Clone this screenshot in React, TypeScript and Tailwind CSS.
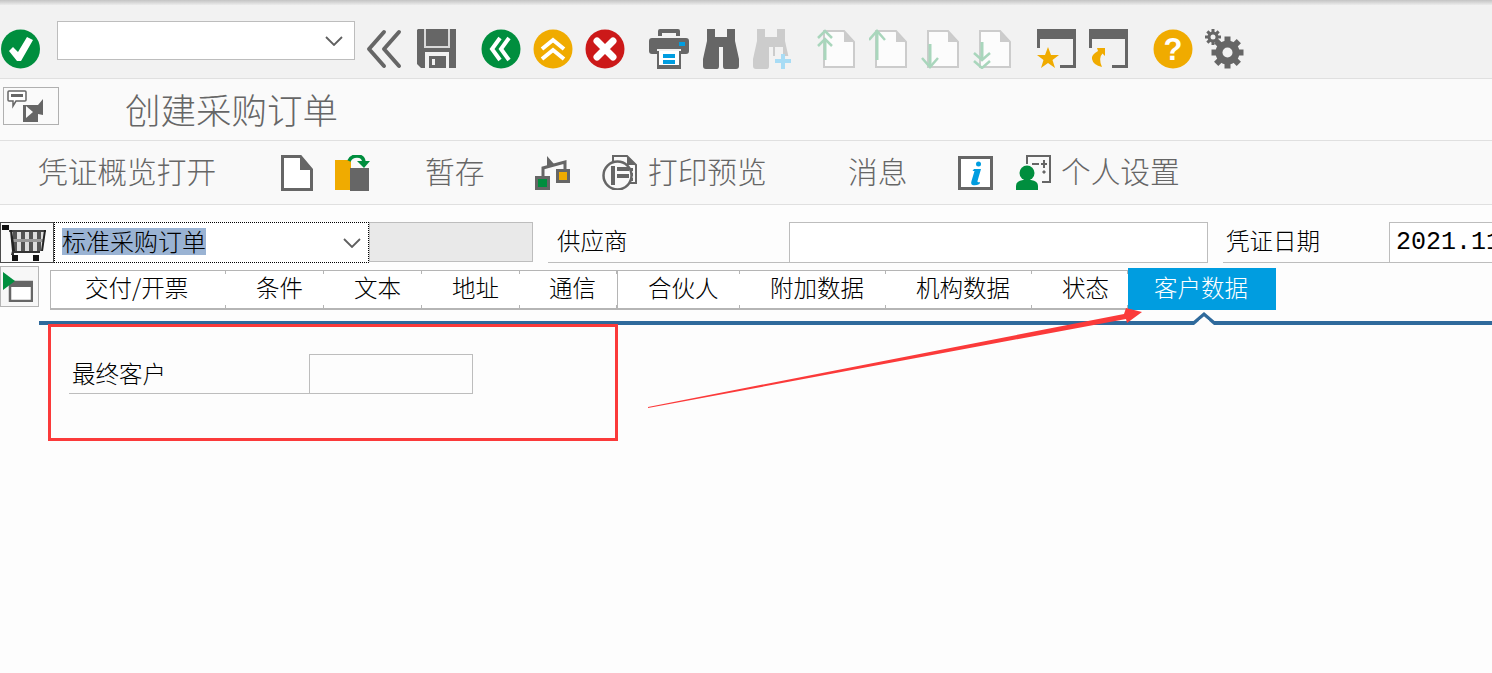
import React from 'react';

const GRAY = '#666666';
const GREEN = '#008e3e';
const AMBER = '#f0ab00';
const BLUE = '#009de0';
const PALE_GREEN = '#a9d6bc';
const PALE_GRAY = '#cccccc';

const Icon: React.FC<{ children: React.ReactNode; className?: string; size?: number; h?: number }> = ({ children, className, size = 40, h = 40 }) => (
  <svg width={size} height={h} viewBox={`0 0 ${size} ${h}`} className={`shrink-0 block ${className ?? ''}`}>
    {children}
  </svg>
);

const CheckIcon = () => (
  <Icon>
    <circle cx="19.500" cy="20" r="19.500" fill={GREEN} />
    <path d="M8 22l4-4 5 5 9-15 6 3-12 21h-4z" fill="white" />
  </Icon>
);

const BackIcon = () => (
  <Icon size={36}>
    <path d="M18 3L3 20l15 17M33 3L18 20l15 17" fill="none" stroke={GRAY} strokeWidth="4" strokeLinecap="round" strokeLinejoin="round" />
  </Icon>
);

const SaveIcon = () => (
  <Icon>
    <path d="M1 0h38v39H4l-4-4V1z" fill={GRAY} />
    <path d="M7 0h26v19H7z" fill="#d9d9d9" />
    <path d="M9 0h22v17H9z" fill={GRAY} />
    <path d="M8 23h24v16H8z" fill="#f2f2f2" />
    <path d="M12 27h17v12H12z" fill={GRAY} />
    <path d="M15 30h3v6h-3z" fill="#f2f2f2" />
  </Icon>
);

const GreenBackIcon = () => (
  <Icon>
    <circle cx="20" cy="20" r="19.500" fill={GREEN} />
    <path d="M19 9l-8 11 8 11M28 9l-8 11 8 11" fill="none" stroke="white" strokeWidth="4" />
  </Icon>
);

const AmberUpIcon = () => (
  <Icon>
    <circle cx="20" cy="20" r="19.500" fill={AMBER} />
    <path d="M9 20l11-9 11 9M9 30l11-9 11 9" fill="none" stroke="white" strokeWidth="4" />
  </Icon>
);

const RedCloseIcon = () => (
  <Icon>
    <circle cx="20" cy="20" r="19.500" fill="#cc1919" />
    <path d="M12 12l16 16M28 12L12 28" stroke="white" strokeWidth="7" strokeLinecap="round" />
  </Icon>
);

const PrinterIcon = () => (
  <Icon>
    <path d="M9 7V2q0-2 2-2h18q2 0 2 2v5h-4V4H13v3z" fill={GRAY} />
    <path d="M3 9h34q3 0 3 3v10q0 3-3 3h-5v-5H8v5H3q-3 0-3-3V12q0-3 3-3z" fill={GRAY} />
    <path d="M30 13h6v4h-6z" fill={BLUE} />
    <path d="M8 22h24v18H8z" fill={GRAY} />
    <path d="M10 22h20v14H10z" fill="white" />
    <path d="M14 25h12v4H14zM14 31h12v4H14z" fill={BLUE} />
  </Icon>
);

const binoPath = 'M4 0h8v8h12V0h8v12l4 18v7q0 3-3 3H22q-2 0-2-3V18h-4v19q0 3-2 3H3q-3 0-3-3v-7l4-18z';

const BinocularsIcon = () => (
  <Icon size={36}>
    <path d={binoPath} fill={GRAY} />
  </Icon>
);

const BinocularsPlusIcon = () => (
  <Icon>
    <path d={binoPath} fill={PALE_GRAY} />
    <path d="M20 27h20v13H20z" fill="#f2f2f2" />
    <path d="M22 18h8v9h-8z" fill="#f2f2f2" />
    <path d="M30 25v15M22 32h16" stroke="#a8dcf5" strokeWidth="4" fill="none" />
  </Icon>
);

const Sheet: React.FC<{ x: number; y?: number }> = ({ x, y = 2 }) => (
  <g>
    <path d={`M${x} ${y}h20l10 11v25H${x}z`} fill="#fcfcfc" stroke={PALE_GRAY} strokeWidth="2" />
    <path d={`M${x + 20} ${y}l10 11H${x + 20}z`} fill={PALE_GRAY} />
  </g>
);

const PageUpDouble = () => (
  <Icon size={38}>
    <Sheet x={7} />
    <path d="M8 31V10" stroke={PALE_GREEN} strokeWidth="3" />
    <path d="M1 9l7-7 7 7M1 17l7-7 7 7" fill="none" stroke={PALE_GREEN} strokeWidth="2.500" />
  </Icon>
);

const PageUp = () => (
  <Icon size={38}>
    <Sheet x={7} />
    <path d="M8 31V3" stroke={PALE_GREEN} strokeWidth="3" />
    <path d="M0 11l8-9 8 9" fill="none" stroke={PALE_GREEN} strokeWidth="2.500" />
  </Icon>
);

const PageDown = () => (
  <Icon size={38}>
    <Sheet x={7} />
    <path d="M9 15v23" stroke={PALE_GREEN} strokeWidth="3" />
    <path d="M1 29l8 9 8-9" fill="none" stroke={PALE_GREEN} strokeWidth="2.500" />
  </Icon>
);

const PageDownDouble = () => (
  <Icon size={38}>
    <Sheet x={7} />
    <path d="M9 13v18" stroke={PALE_GREEN} strokeWidth="3" />
    <path d="M1 24l8 7 8-7M1 32l8 7 8-7" fill="none" stroke={PALE_GREEN} strokeWidth="2.500" />
  </Icon>
);

const WindowBase = () => (
  <path d="M0 0h39v39H23v-3h13V10H3v9H0z" fill={GRAY} />
);

const WindowStarIcon = () => (
  <Icon>
    <WindowBase />
    <path d="M11 18l3 8h8l-6.500 5L18 39l-7-5-7 5 2.500-8L0 26h8z" fill={AMBER} />
  </Icon>
);

const WindowArrowIcon = () => (
  <Icon>
    <WindowBase />
    <path d="M8 19h8v8l-2.500-2.500Q9 29 13 38q-9-2-10-8-1-4 6-8z" fill={AMBER} />
  </Icon>
);

const HelpIcon = () => (
  <Icon>
    <circle cx="20" cy="20" r="19.500" fill={AMBER} />
    <text x="20" y="31" textAnchor="middle" fill="white" fontSize="31" fontWeight="700" fontFamily="'Liberation Sans', sans-serif">?</text>
  </Icon>
);

const Gear: React.FC<{ cx: number; cy: number; r: number; t: number; w: number; sw: number }> = ({ cx, cy, r, t, w, sw }) => (
  <g>
    {[0, 45, 90, 135].map((a) => (
      <rect key={a} x={cx - w / 2} y={cy - t} width={w} height={t * 2} fill={GRAY} transform={`rotate(${a} ${cx} ${cy})`} />
    ))}
    <circle cx={cx} cy={cy} r={r} fill="none" stroke={GRAY} strokeWidth={sw} />
  </g>
);

const GearIcon = () => (
  <Icon>
    <Gear cx={8} cy={8} r={4} t={8} w={3} sw={3} />
    <circle cx={22.500} cy={23.500} r={15} fill="#f2f2f2" />
    <circle cx={8} cy={8} r={2.500} fill="#f2f2f2" />
    <Gear cx={22.500} cy={23.500} r={8.500} t={16} w={6} sw={7} />
    <circle cx={22.500} cy={23.500} r={5} fill="#f2f2f2" />
  </Icon>
);

const DocIcon = () => (
  <Icon size={32} h={36}>
    <path d="M1.500 1.500h18l11 13v20h-29z" fill="white" stroke={GRAY} strokeWidth="3" />
    <path d="M19 1l12 14H19z" fill={GRAY} />
  </Icon>
);

const TransferIcon = () => (
  <Icon size={35} h={36}>
    <path d="M0 7h16v30H0z" fill={AMBER} transform="translate(0 -2)" />
    <path d="M15 13h19v23H15z" fill={GRAY} />
    <path d="M14 6q2-5 8-5 7 0 7 7" fill="none" stroke={GREEN} strokeWidth="3.500" />
    <path d="M22 6h13l-6 7z" fill={GREEN} />
  </Icon>
);

const TreeIcon = () => (
  <Icon size={35} h={35}>
    <path d="M12 1l7 8-7 2z" fill={GRAY} />
    <path d="M8 23v-10l22-6v12" fill="none" stroke={GRAY} strokeWidth="3" />
    <path d="M0 21h15v14H0z" fill={GRAY} />
    <path d="M3 24h9v8H3z" fill={GREEN} />
    <path d="M21 14h14v14H21z" fill={GRAY} />
    <path d="M24 17h8v8h-8z" fill={AMBER} />
  </Icon>
);

const PrintPreviewIcon = () => (
  <Icon size={36} h={35}>
    <path d="M11 8V1h14l9 9v18H26" fill="none" stroke={GRAY} strokeWidth="2" />
    <path d="M25 1l9 9h-9z" fill={GRAY} />
    <path d="M28 13h3v3h-3zM28 18h3v3h-3zM28 23h3v3h-3z" fill={GRAY} />
    <circle cx="15.500" cy="20.500" r="14" fill="#f9f9f9" stroke={GRAY} strokeWidth="2.500" />
    <path d="M9 11h4v19H9zM15 12h12v4H15zM15 19h12v4H15z" fill={GRAY} />
  </Icon>
);

const InfoIcon = () => (
  <Icon size={35} h={34}>
    <rect x="1.500" y="1.500" width="32" height="31" fill="white" stroke={GRAY} strokeWidth="3" />
    <circle cx="20.500" cy="8" r="2.500" fill={BLUE} />
    <path d="M16 13h7l-3.500 12q-.5 2 2.500 1l-.5 2q-4 2-7 1-2-1-1-4l3-10h-2z" fill={BLUE} />
  </Icon>
);

const PersonIcon = () => (
  <Icon size={35} h={35}>
    <path d="M11 9V1h23v26h-8" fill="none" stroke={GRAY} strokeWidth="2" />
    <path d="M16 8h7v2h-7zM25 8h6v2h-6zM27 5h2v8h-2zM26 17l2-2 2 2-2 2z" fill={GRAY} />
    <circle cx="11" cy="18" r="7.500" fill={GREEN} />
    <path d="M0 35v-4q0-5 7-6h8q7 1 7 6v4z" fill={GREEN} />
  </Icon>
);

const CartIcon = () => (
  <Icon size={46} h={36}>
    <path d="M0 0h7v5H0z" fill="#111" />
    <path d="M7 5h37l-3 21H11z" fill="#dedede" />
    <path d="M7 5h37v2H7z" fill="#444" />
    <path d="M11 7h4v19h-4zM19 7h4v19h-4zM27 7h4v19h-4zM35 7h4v19h-4z" fill="#555" />
    <path d="M9 14h33v3H9z" fill="#999" />
    <path d="M8 5h2l3 21h-3zM42 5h2l-3 21h-2z" fill="#222" />
    <path d="M10 26h28v2H12v2h-3z" fill="#333" />
    <path d="M10 30h6v6h-6zM31 30h6v6h-6z" fill="#111" />
  </Icon>
);

const CollapseIcon = () => (
  <Icon size={30} h={30}>
    <rect x="7" y="10" width="22" height="19" fill="white" stroke={GRAY} strokeWidth="2.500" />
    <path d="M7 9h22v6H7z" fill={GRAY} />
    <path d="M0 0l12 9-12 9z" fill={GREEN} />
  </Icon>
);

const MessageToggleIcon = () => (
  <Icon size={36} h={32}>
    <path d="M2 1h16q1 0 1 1v8q0 1-1 1H9l-3 5v-5H2q-1 0-1-1V2q0-1 1-1z" fill="white" stroke={GRAY} strokeWidth="1.500" />
    <path d="M4 4h12v3H4z" fill={GRAY} />
    <path d="M16 15h15l5-6v16l-5-1v9H16z" fill={GRAY} />
    <path d="M19 16l7 6-7 6z" fill="#fafafa" />
  </Icon>
);

const Chevron = () => (
  <svg width="18" height="10" viewBox="0 0 18 10" className="shrink-0">
    <path d="M1 1l8 8 8-8" fill="none" stroke="#5f5f5f" strokeWidth="1.800" />
  </svg>
);

const tabs = [
  { label: '交付/开票', cls: 'w-[176px] pl-[35px]' },
  { label: '条件', cls: 'w-[98px] pl-[30px]' },
  { label: '文本', cls: 'w-[98px] pl-[30px]' },
  { label: '地址', cls: 'w-[98px] pl-[30px]' },
  { label: '通信', cls: 'w-[98px] pl-[29px] border-r border-[#b5b5b5]' },
  { label: '合伙人', cls: 'w-[122px] pl-[30px]' },
  { label: '附加数据', cls: 'w-[146px] pl-[30px]' },
  { label: '机构数据', cls: 'w-[146px] pl-[30px]' },
  { label: '状态', cls: 'w-[96px] pl-[30px]' },
];

export default function App() {
  return (
    <div
      className="relative w-[1492px] h-[673px] overflow-hidden bg-[#fdfdfd]"
      style={{ fontFamily: '"Noto Sans CJK SC", "Liberation Sans", sans-serif' }}
    >
      {/* barre système */}
      <div className="h-[5px] bg-gradient-to-b from-[#c4c4c4] to-[#ececec]" />
      <div className="h-[74px] pt-[14px] flex items-center bg-[#f2f2f2] border-b border-[#e0e0e0]">
        <div className="ml-px"><CheckIcon /></div>
        <div className="ml-[16px] -mt-[16px] w-[298px] h-[39px] bg-white border border-[#bdbdbd] flex items-center justify-end pr-[11px]">
          <Chevron />
        </div>
        <div className="ml-[11px]"><BackIcon /></div>
        <div className="ml-[15px]"><SaveIcon /></div>
        <div className="ml-[24px] flex gap-[12px]">
          <GreenBackIcon />
          <AmberUpIcon />
          <RedCloseIcon />
        </div>
        <div className="ml-[24px]"><PrinterIcon /></div>
        <div className="ml-[14px]"><BinocularsIcon /></div>
        <div className="ml-[14px]"><BinocularsPlusIcon /></div>
        <div className="ml-[24px] flex gap-[14px]">
          <PageUpDouble />
          <PageUp />
          <PageDown />
          <PageDownDouble />
        </div>
        <div className="ml-[26px] flex gap-[12px]">
          <WindowStarIcon />
          <WindowArrowIcon />
        </div>
        <div className="ml-[24px] flex gap-[12px]">
          <HelpIcon />
          <GearIcon />
        </div>
      </div>

      {/* titre */}
      <div className="h-[62px] flex items-center bg-[#fafafa] border-b border-[#e0e0e0]">
        <div className="ml-[3px] w-[56px] h-[38px] -mt-[8px] border border-[#b0b0b0] flex items-center pl-[3px]">
          <MessageToggleIcon />
        </div>
        <span className="ml-[66px] -mt-[2px] text-[35.500px] leading-none font-light text-[#666666] whitespace-nowrap">创建采购订单</span>
      </div>

      {/* barre d'application */}
      <div className="h-[64px] flex items-center bg-[#f9f9f9] border-b border-[#e0e0e0] text-[29.700px] leading-none font-light text-[#666666] whitespace-nowrap">
        <span className="ml-[38px] w-[178px] -mt-[4px]">凭证概览打开</span>
        <div className="ml-[65px] mt-[1px]"><DocIcon /></div>
        <div className="ml-[22px] mt-[1px]"><TransferIcon /></div>
        <span className="ml-[55px] w-[58px] -mt-[4px]">暂存</span>
        <div className="ml-[52px]"><TreeIcon /></div>
        <div className="ml-[32px]"><PrintPreviewIcon /></div>
        <span className="ml-[10px] w-[117px] -mt-[4px]">打印预览</span>
        <span className="ml-[83px] w-[57px] -mt-[4px]">消息</span>
        <div className="ml-[53px]"><InfoIcon /></div>
        <div className="ml-[23px]"><PersonIcon /></div>
        <span className="ml-[10px] -mt-[4px]">个人设置</span>
      </div>

      {/* ligne d'en-tête */}
      <div className="mt-[17px] h-[41px] flex text-[23.500px] leading-none font-light text-black whitespace-nowrap">
        <div className="w-[54px] h-[41px] border border-[#4a4a4a] flex items-center pl-px bg-[#fafafa]">
          <CartIcon />
        </div>
        <div className="w-[315px] h-[41px] border border-dotted border-black flex items-center justify-between pl-[7px] pr-[7px] bg-white">
          <span className="bg-[#9ab3d3] h-[27px] w-[144px] -mt-[2px] pb-[2px] flex items-center text-[24px]">标准采购订单</span>
          <Chevron />
        </div>
        <div className="w-[164px] h-[40px] bg-[#e9e9e9] border border-[#bdbdbd]" />
        <div className="ml-[15px] w-[241px] h-[41px] border-b border-[#bdbdbd] flex items-center pl-[9px] pb-[2px]">供应商</div>
        <div className="w-[419px] h-[41px] border border-[#bdbdbd] bg-white" />
        <div className="ml-[15px] w-[166px] h-[41px] border-b border-[#bdbdbd] flex items-center pl-[3px] pb-[2px]">凭证日期</div>
        <div
          className="flex-1 h-[41px] border-l border-b border-t border-[#bdbdbd] bg-white flex items-center pl-[6px] text-[25px] font-normal overflow-hidden"
          style={{ fontFamily: '"Liberation Mono", monospace' }}
        >
          2021.11
        </div>
      </div>

      {/* onglets */}
      <div className="mt-[3px] h-[44px] flex items-start text-[23.500px] leading-none font-light text-black whitespace-nowrap">
        <div className="w-[39px] h-[41px] border border-[#b5b5b5] bg-[#f7f7f7] pl-[2px] pt-[5px]">
          <CollapseIcon />
        </div>
        <div className="ml-[11px] mt-[4px] h-[40px] flex border-l border-t border-b-[2px] border-[#b5b5b5] bg-white">
          {tabs.map((t, i) => (
            <div key={t.label} className={`relative h-full flex items-center pb-[3px] ${i === 0 ? '-ml-px' : ''} ${t.cls}`}>
              {t.label}
              <span className="absolute right-0 top-0 w-px h-[3px] bg-[#b5b5b5]" />
              <span className="absolute right-0 bottom-0 w-px h-[3px] bg-[#b5b5b5]" />
            </div>
          ))}
        </div>
        <div className="mt-[2px] w-[148px] h-[42px] bg-[#009de0] text-white flex items-center pl-[26px] pb-[3px]">客户数据</div>
      </div>

      {/* filet bleu avec encoche */}
      <div className="relative mt-[11px] ml-[39px] h-[4px] bg-[#2f6a9c]">
        <svg width="30" height="14" viewBox="0 0 30 14" className="absolute left-[1150px] -top-[10px]">
          <path d="M1 13L15 1l14 12h-5L15 5.500 6 13z" fill="#2f6a9c" />
          <path d="M5 14l10-8.500L25 14z" fill="#fdfdfd" />
        </svg>
      </div>

      {/* contenu */}
      <div className="mt-[29px] ml-[69px] flex h-[40px] text-[23.500px] leading-none font-light text-black whitespace-nowrap">
        <div className="w-[240px] border-b border-[#bdbdbd] flex items-center pl-[3px]">最终客户</div>
        <div className="w-[164px] border border-[#bdbdbd]" />
      </div>

      {/* annotations rouges */}
      <div className="absolute left-[48px] top-[324px] w-[570px] h-[117px] border-[3px] border-[#fb3a3a]" />
      <svg width="1492" height="673" className="absolute left-0 top-0 pointer-events-none">
        <path d="M648 407L1124 314l2-6 16 4-15 11-1-4L648 408z" fill="#fb3a3a" />
      </svg>
    </div>
  );
}
